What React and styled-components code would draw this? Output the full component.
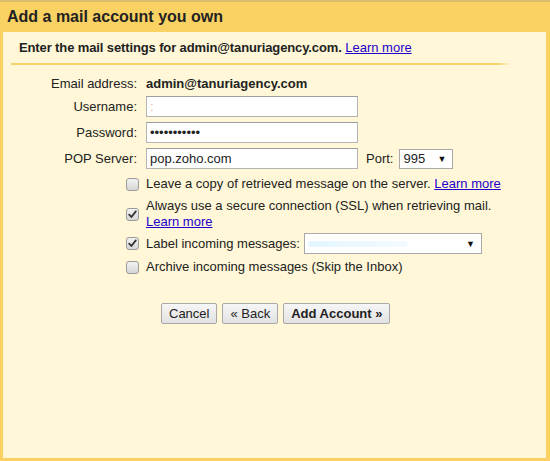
import React from "react";
import styled, { createGlobalStyle } from "styled-components";

const Global = createGlobalStyle`
  html, body { margin: 0; padding: 0; background: #fad163; }
  body { font-family: "Liberation Sans", Arial, sans-serif; font-size: 13px; color: #222; }
  * { box-sizing: border-box; }
`;

const Frame = styled.div`
  width: 550px;
  height: 461px;
  background: #fad163;
  border-top: 2px solid #d9bc6c;
  display: flex;
  flex-direction: column;
  padding: 0 4px 3px 3px;
`;

const Title = styled.h1`
  margin: 0;
  height: 30px;
  padding: 5px 0 0 4px;
  font-size: 16px;
  font-weight: bold;
  color: #222;
  line-height: 19px;
`;

const Panel = styled.div`
  flex: 1;
  background: #fff7d7;
  padding-top: 8px;
`;

const Intro = styled.div`
  font-weight: bold;
  padding-left: 16px;
  line-height: 16px;
  letter-spacing: -0.12px;
`;

const Separator = styled.div`
  height: 2px;
  margin: 7px 34px 0 8px;
  background: linear-gradient(to right, #f5d36b 97%, #fff7d7);
`;

const Link = styled.a`
  color: #2200cc;
  text-decoration: underline;
  cursor: pointer;
  font-weight: normal;
  letter-spacing: 0;
`;

const Form = styled.div`
  display: flex;
  flex-direction: column;
  padding-top: 11px;
`;

const Row = styled.div`
  display: grid;
  grid-template-columns: 134px 1fr;
  column-gap: 9px;
  align-items: center;
  margin-top: ${(p) => p.$mt || 0}px;
  min-height: ${(p) => p.$h || 16}px;
`;

const Label = styled.label`
  text-align: right;
  line-height: 16px;
`;

const Value = styled.div`
  display: flex;
  align-items: center;
  gap: ${(p) => p.$gap ?? 9}px;
  line-height: 16px;
`;

const Strong = styled.span`
  font-weight: bold;
`;

const TextInput = styled.div`
  width: 212px;
  height: 21px;
  background: #fff;
  border: 1px solid #b4b4b4;
  border-top-color: #a0a0a0;
  padding: 0 3px;
  display: flex;
  align-items: center;
  font-size: 13px;
  color: #222;
`;

const Select = styled.div`
  width: ${(p) => p.$w}px;
  height: ${(p) => p.$ht || 21}px;
  background: #fff;
  border: 1px solid #a9a9a9;
  display: flex;
  align-items: center;
  justify-content: space-between;
  padding: 0 6px 0 3px;
  font-size: 13px;
`;

const Arrow = styled.span`
  font-size: 9px;
  color: #111;
`;

const Blur = styled.span`
  display: inline-block;
  width: ${(p) => p.$w}px;
  height: 6px;
  background: linear-gradient(to right, #e3f6ff, #f4fbff);
  border-radius: 3px;
`;

const Box = styled.span`
  justify-self: end;
  margin-right: -2px;
  width: 13px;
  height: 13px;
  border: 1px solid #9b9b9b;
  border-radius: 3px;
  background: linear-gradient(#f2f2f2, #d6d6d6);
  display: flex;
  align-items: center;
  justify-content: center;
`;

const Check = () => (
  <svg width="9" height="9" viewBox="0 0 9 9">
    <path d="M1.2 4.6 L3.4 7 L7.8 1.4" fill="none" stroke="#333" strokeWidth="1.8" strokeLinecap="round" strokeLinejoin="round" />
  </svg>
);

const Text = styled.div`
  line-height: 16px;
`;

const Buttons = styled.div`
  display: flex;
  gap: 5px;
  padding-left: 158px;
  margin-top: 28px;
`;

const Button = styled.button`
  height: 21px;
  padding: 0 7px;
  font-family: "Liberation Sans", Arial, sans-serif;
  font-size: 13px;
  font-weight: ${(p) => (p.$primary ? "bold" : "normal")};
  color: #222;
  background: linear-gradient(#f6f6f6, #e2e2e2);
  border: 1px solid #a8a8a8;
  border-radius: 2px;
  line-height: 18px;
`;

export default function App() {
  return (
    <>
      <Global />
      <Frame>
        <Title>Add a mail account you own</Title>
        <Panel>
          <Intro>
            Enter the mail settings for admin@tanuriagency.com. <Link>Learn more</Link>
          </Intro>
          <Separator />
          <Form>
            <Row>
              <Label>Email address:</Label>
              <Value><Strong>admin@tanuriagency.com</Strong></Value>
            </Row>
            <Row $mt={4} $h={21}>
              <Label>Username:</Label>
              <Value><TextInput><span style={{ color: "#f0b0b0" }}>:</span></TextInput></Value>
            </Row>
            <Row $mt={5} $h={21}>
              <Label>Password:</Label>
              <Value><TextInput>•••••••••••</TextInput></Value>
            </Row>
            <Row $mt={5} $h={21}>
              <Label>POP Server:</Label>
              <Value $gap={8}>
                <TextInput>pop.zoho.com</TextInput>
                <span>Port:</span>
                <Select $w={54} $ht={20} style={{ marginLeft: -2 }}>995<Arrow>▼</Arrow></Select>
              </Value>
            </Row>
            <Row $mt={7}>
              <Box />
              <Text>Leave a copy of retrieved message on the server. <Link>Learn more</Link></Text>
            </Row>
            <Row $mt={6}>
              <Box><Check /></Box>
              <Text>
                Always use a secure connection (SSL) when retrieving mail.
                <br />
                <Link>Learn more</Link>
              </Text>
            </Row>
            <Row $mt={3} $h={21}>
              <Box><Check /></Box>
              <Value>
                <span>Label incoming messages:</span>
                <Select $w={178} style={{ marginLeft: -5 }}>
                  <Blur $w={100} />
                  <Arrow>▼</Arrow>
                </Select>
              </Value>
            </Row>
            <Row $mt={5}>
              <Box />
              <Text>Archive incoming messages (Skip the Inbox)</Text>
            </Row>
          </Form>
          <Buttons>
            <Button>Cancel</Button>
            <Button>« Back</Button>
            <Button $primary>Add Account »</Button>
          </Buttons>
        </Panel>
      </Frame>
    </>
  );
}
